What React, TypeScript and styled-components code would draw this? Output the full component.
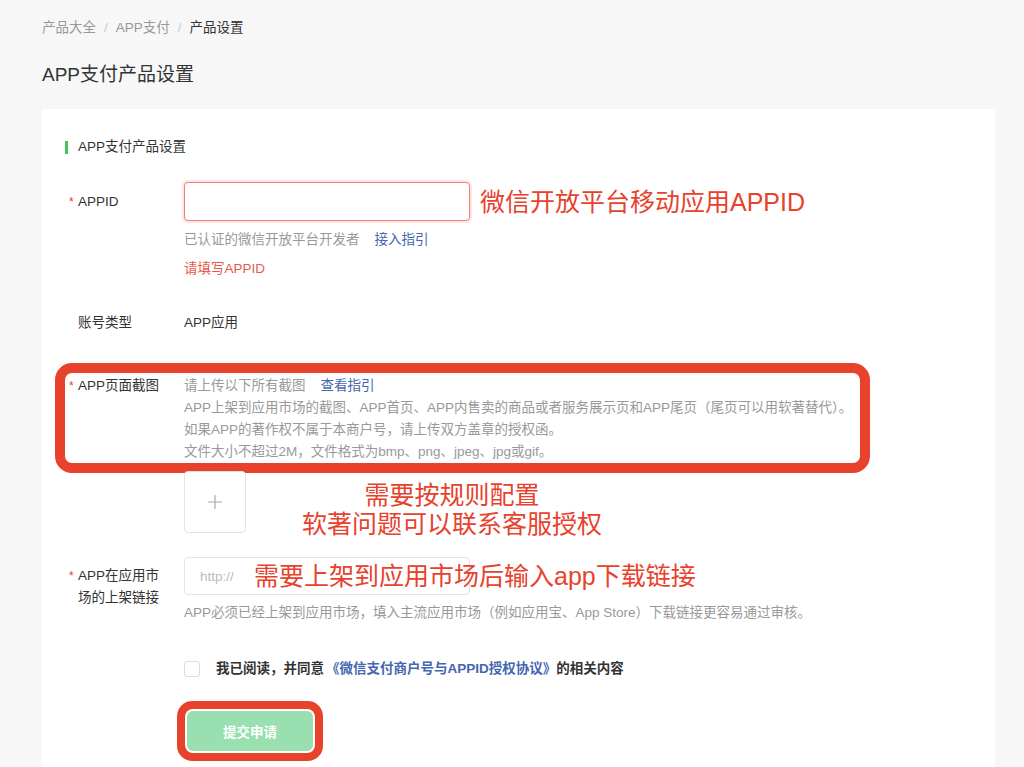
import React from "react";
import styled, { createGlobalStyle } from "styled-components";

const RED = "#e8412c";
const FONT = `"Liberation Sans", "Noto Sans CJK SC", sans-serif`;

const GlobalStyle = createGlobalStyle`
  html, body { margin: 0; padding: 0; background: #f7f7f7; overflow: hidden; }
  body { font-family: ${FONT}; color: #333; font-size: 13.5px; }
  * { box-sizing: border-box; }
`;

const Page = styled.div`
  height: 100vh;
  overflow: hidden;
  padding: 18px 29px 0 42px;
`;

const Breadcrumb = styled.nav`
  display: flex;
  align-items: center;
  line-height: 20px;
  font-size: 13.5px;
`;

const Crumb = styled.span<{ $current?: boolean }>`
  color: ${(p) => (p.$current ? "#333" : "#999")};
`;

const Sep = styled.span`
  color: #ccc;
  margin: 0 8px;
`;

const Title = styled.h1`
  margin: 23px 0 20px;
  font-size: 19px;
  line-height: 28px;
  font-weight: 400;
  color: #333;
`;

const Card = styled.section`
  background: #fff;
  padding: 28px 23px 60px;
  border-radius: 2px;
`;

const SectionHeader = styled.div`
  display: flex;
  align-items: center;
  gap: 10px;
  line-height: 20px;
  color: #333;
`;

const Bar = styled.i`
  width: 3px;
  height: 13px;
  background: #45c35b;
`;

const FormRow = styled.div<{ $mt: number }>`
  display: grid;
  grid-template-columns: 119px 1fr;
  margin-top: ${(p) => p.$mt}px;
  position: relative;
`;

const HighlightRow = styled(FormRow)`
  &::after {
    content: "";
    position: absolute;
    left: -10px;
    right: 102px;
    top: -12px;
    bottom: -10px;
    border: 10px solid ${RED};
    border-radius: 17px;
    pointer-events: none;
  }
`;

const Label = styled.div<{ $pt?: number; $lh?: number }>`
  padding-left: 13px;
  padding-top: ${(p) => p.$pt ?? 0}px;
  line-height: ${(p) => p.$lh ?? 20}px;
  color: #333;
  width: 110px;
`;

const Req = styled.span`
  display: inline-block;
  width: 11px;
  margin-left: -11px;
  padding-left: 2px;
  color: ${RED};
  font-size: 12px;
`;

const Content = styled.div`
  display: flex;
  flex-direction: column;
  align-items: flex-start;
`;

const InputLine = styled.div`
  display: flex;
  align-items: center;
`;

const InputWrap = styled.div`
  position: relative;
  width: 286px;
`;

const Input = styled.input<{ $error?: boolean; $h: number }>`
  display: block;
  width: 286px;
  height: ${(p) => p.$h}px;
  border: 1px solid ${(p) => (p.$error ? "#ef7f77" : "#e3e3e3")};
  box-shadow: ${(p) => (p.$error ? "0 0 0 2px rgba(239, 110, 100, 0.18)" : "none")};
  border-radius: 4px;
  padding: 0 15px;
  font-family: ${FONT};
  font-size: 13.5px;
  color: #333;
  outline: none;
  background: #fff;
  &::placeholder {
    color: #bbb;
  }
`;

const Annotation = styled.span`
  color: ${RED};
  font-size: 25px;
  line-height: 30px;
  white-space: nowrap;
  margin-left: 10px;
`;

const OverlayAnnotation = styled(Annotation)`
  position: absolute;
  left: 60px;
  top: 50%;
  transform: translateY(-50%);
`;

const Hint = styled.div<{ $mt?: number; $lh?: number }>`
  color: #999;
  line-height: ${(p) => p.$lh ?? 20}px;
  margin-top: ${(p) => p.$mt ?? 0}px;
  white-space: nowrap;
`;

const Link = styled.a`
  color: #4466b0;
  margin-left: 15px;
  text-decoration: none;
  cursor: pointer;
`;

const ErrorText = styled.div`
  color: #e6584c;
  line-height: 20px;
  margin-top: 9px;
`;

const Value = styled.div`
  line-height: 20px;
  color: #333;
`;

const UploadLine = styled.div`
  display: flex;
  align-items: flex-start;
`;

const UploadBox = styled.div`
  width: 62px;
  height: 62px;
  border: 1px solid #e2e2e2;
  border-radius: 4px;
  display: flex;
  align-items: center;
  justify-content: center;
  background: #fff;
`;

const AnnotationBlock = styled.div`
  margin-left: 56px;
  margin-top: 10px;
  color: ${RED};
  font-size: 25px;
  line-height: 29px;
  text-align: center;
  white-space: nowrap;
`;

const Agreement = styled.label`
  display: flex;
  align-items: center;
  line-height: 20px;
  font-weight: 600;
  color: #333;
`;

const Check = styled.span`
  width: 16px;
  height: 16px;
  border: 1px solid #dcdcdc;
  border-radius: 3px;
  margin-right: 16px;
  background: #fff;
`;

const AgreeLink = styled.a`
  color: #4466b0;
  text-decoration: none;
  margin-left: 2px;
`;

const SubmitButton = styled.button`
  margin-left: 3px;
  width: 126px;
  height: 40px;
  border: none;
  border-radius: 6px;
  background: #99dfb0;
  color: #fff;
  font-family: ${FONT};
  font-size: 13.5px;
  font-weight: 700;
  box-shadow: 0 0 0 2px #fff, 0 0 0 10px ${RED};
  cursor: not-allowed;
`;

const PlusIcon = () => (
  <svg width="16" height="16" viewBox="0 0 16 16">
    <path d="M8 1v14M1 8h14" stroke="#a8a8a8" strokeWidth="1.2" fill="none" />
  </svg>
);

export default function App() {
  return (
    <>
      <GlobalStyle />
      <Page>
        <Breadcrumb>
          <Crumb>产品大全</Crumb>
          <Sep>/</Sep>
          <Crumb>APP支付</Crumb>
          <Sep>/</Sep>
          <Crumb $current>产品设置</Crumb>
        </Breadcrumb>
        <Title>APP支付产品设置</Title>
        <Card>
          <SectionHeader>
            <Bar />
            <span>APP支付产品设置</span>
          </SectionHeader>

          <FormRow $mt={25}>
            <Label $pt={10}>
              <Req>*</Req>APPID
            </Label>
            <Content>
              <InputLine>
                <Input $error $h={39} />
                <Annotation>微信开放平台移动应用APPID</Annotation>
              </InputLine>
              <Hint $mt={9}>
                已认证的微信开放平台开发者<Link>接入指引</Link>
              </Hint>
              <ErrorText>请填写APPID</ErrorText>
            </Content>
          </FormRow>

          <FormRow $mt={34}>
            <Label>账号类型</Label>
            <Content>
              <Value>APP应用</Value>
            </Content>
          </FormRow>

          <HighlightRow $mt={42}>
            <Label $lh={22}>
              <Req>*</Req>APP页面截图
            </Label>
            <Content>
              <Hint $lh={22}>
                请上传以下所有截图<Link>查看指引</Link>
              </Hint>
              <Hint $lh={22}>
                APP上架到应用市场的截图、APP首页、APP内售卖的商品或者服务展示页和APP尾页（尾页可以用软著替代）。
              </Hint>
              <Hint $lh={22}>如果APP的著作权不属于本商户号，请上传双方盖章的授权函。</Hint>
              <Hint $lh={22}>文件大小不超过2M，文件格式为bmp、png、jpeg、jpg或gif。</Hint>
            </Content>
          </HighlightRow>

          <FormRow $mt={8}>
            <div />
            <UploadLine>
              <UploadBox>
                <PlusIcon />
              </UploadBox>
              <AnnotationBlock>
                需要按规则配置
                <br />
                软著问题可以联系客服授权
              </AnnotationBlock>
            </UploadLine>
          </FormRow>

          <FormRow $mt={18}>
            <Label $pt={8} $lh={22}>
              <Req>*</Req>APP在应用市
              <br />
              场的上架链接
            </Label>
            <Content>
              <InputWrap>
                <Input $h={38} placeholder="http://" />
                <OverlayAnnotation>需要上架到应用市场后输入app下载链接</OverlayAnnotation>
              </InputWrap>
              <Hint $mt={8}>
                APP必须已经上架到应用市场，填入主流应用市场（例如应用宝、App Store）下载链接更容易通过审核。
              </Hint>
            </Content>
          </FormRow>

          <FormRow $mt={36}>
            <div />
            <Agreement>
              <Check />
              我已阅读，并同意
              <AgreeLink>《微信支付商户号与APPID授权协议》</AgreeLink>
              的相关内容
            </Agreement>
          </FormRow>

          <FormRow $mt={32}>
            <div />
            <Content>
              <SubmitButton>提交申请</SubmitButton>
            </Content>
          </FormRow>
        </Card>
      </Page>
    </>
  );
}
